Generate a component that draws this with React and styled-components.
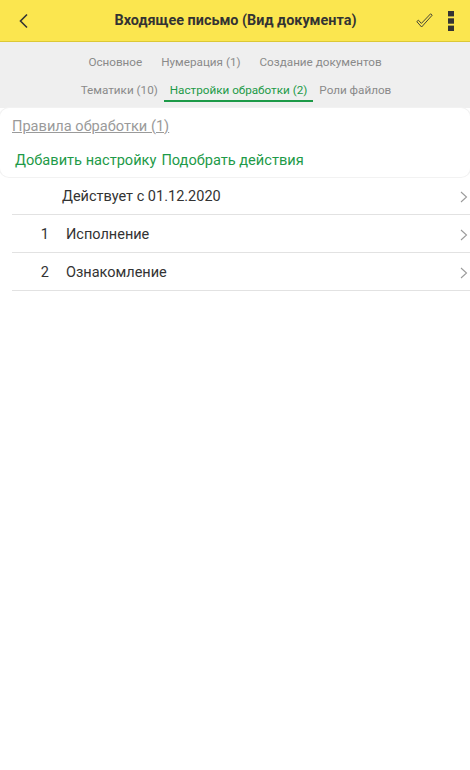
import React from "react"
import styled, { createGlobalStyle } from "styled-components"

const GlobalStyle = createGlobalStyle`
    body {
        margin: 0;
        background: #ffffff;
        font-family: Roboto, "Liberation Sans", sans-serif;
    }
`

const Page = styled.div`
    width: 470px;
    min-height: 770px;
    background: #ffffff;
`

const Header = styled.header`
    height: 41px;
    background: #fbe64f;
    border-bottom: 1px solid #dcc836;
    display: flex;
    align-items: center;
    padding: 0 16px 0 12px;
    box-sizing: content-box;
`

const IconBtn = styled.button`
    border: none;
    background: none;
    padding: 0;
    width: ${props => props.w || 24}px;
    height: 30px;
    display: flex;
    align-items: center;
    justify-content: ${props => props.align || "center"};
    color: #333;
`

const Title = styled.h1`
    flex: 1;
    margin: 0;
    text-align: center;
    font-size: 14.4px;
    font-weight: 700;
    color: #333;
    padding-left: 19px;
`

const TabsArea = styled.nav`
    background: #efefef;
    padding: 13px 0 6px;
    display: flex;
    flex-direction: column;
    gap: 9px;
`

const TabRow = styled.div`
    display: flex;
    justify-content: center;
    gap: ${props => props.gap}px;
    padding-left: ${props => props.shift || 0}px;
`

const Tab = styled.span`
    font-size: 11.7px;
    line-height: 14px;
    padding: 0 6px 3px;
    color: ${props => (props.active ? "#1d9a48" : "#8a8a8a")};
    border-bottom: 2px solid ${props => (props.active ? "#1d9a48" : "transparent")};
`

const Card = styled.section`
    background: #ffffff;
    border-radius: 9px;
    padding: 10px 12px 8px;
    box-shadow: 0 0 0 1px #f2f2f2;
`

const RulesLink = styled.a`
    display: block;
    font-size: 14.6px;
    color: #9a9a9a;
    text-decoration: underline;
    line-height: 17px;
`

const Actions = styled.div`
    display: flex;
    gap: 5px;
    margin-top: 16px;
    padding-left: 3px;
`

const GreenLink = styled.a`
    font-size: 14.6px;
    line-height: 18px;
    color: #1d9a48;
`

const List = styled.ul`
    list-style: none;
    margin: 0;
    padding: 0 0 0 12px;
`

const Row = styled.li`
    display: flex;
    align-items: center;
    border-bottom: 1px solid #e2e2e2;
    font-size: 14.5px;
    color: #333;
    padding: 2px 2px 0 0;
    box-sizing: border-box;
    height: 38px;
`

const Num = styled.span`
    width: ${props => (props.empty ? 50 : 54)}px;
    text-align: right;
    padding-right: ${props => (props.empty ? 0 : 17)}px;
    box-sizing: border-box;
`

const RowText = styled.span`
    flex: 1;
`

const Chevron = () => (
    <svg width="8" height="12" viewBox="0 0 8 12">
        <path d="M1 1 L6.5 6 L1 11" fill="none" stroke="#9b9b9b" strokeWidth="1.1" />
    </svg>
)

const rows = [
    { num: "", text: "Действует с 01.12.2020" },
    { num: "1", text: "Исполнение" },
    { num: "2", text: "Ознакомление" },
]

const App = () => (
    <Page>
        <GlobalStyle />
        <Header>
            <IconBtn>
                <svg width="12" height="16" viewBox="0 0 12 16">
                    <path d="M9 1.5 L2.5 8 L9 14.5" fill="none" stroke="#333" strokeWidth="1.6" />
                </svg>
            </IconBtn>
            <Title>Входящее письмо (Вид документа)</Title>
            <IconBtn w={32} align="flex-start">
                <svg width="17" height="15" viewBox="0 0 17 15">
                    <path
                        d="M0.8 8.6 L2.4 7.2 L5.4 10.4 L14.6 0.8 L16.2 2.2 L5.6 14 Z"
                        fill="none"
                        stroke="#333"
                        strokeWidth="0.9"
                        strokeLinejoin="round"
                    />
                </svg>
            </IconBtn>
            <IconBtn w={6}>
                <svg width="6" height="20" viewBox="0 0 6 20">
                    <rect x="0" y="0" width="6" height="5.4" fill="#333" />
                    <rect x="0" y="7.3" width="6" height="5.4" fill="#333" />
                    <rect x="0" y="14.6" width="6" height="5.4" fill="#333" />
                </svg>
            </IconBtn>
        </Header>
        <TabsArea>
            <TabRow gap={7} shift={0}>
                <Tab>Основное</Tab>
                <Tab>Нумерация (1)</Tab>
                <Tab>Создание документов</Tab>
            </TabRow>
            <TabRow gap={0} shift={2}>
                <Tab>Тематики (10)</Tab>
                <Tab active>Настройки обработки (2)</Tab>
                <Tab>Роли файлов</Tab>
            </TabRow>
        </TabsArea>
        <Card>
            <RulesLink>Правила обработки (1)</RulesLink>
            <Actions>
                <GreenLink>Добавить настройку</GreenLink>
                <GreenLink>Подобрать действия</GreenLink>
            </Actions>
        </Card>
        <List>
            {rows.map(r => (
                <Row key={r.text}>
                    <Num empty={!r.num}>{r.num}</Num>
                    <RowText>{r.text}</RowText>
                    <Chevron />
                </Row>
            ))}
        </List>
    </Page>
)

export default App
